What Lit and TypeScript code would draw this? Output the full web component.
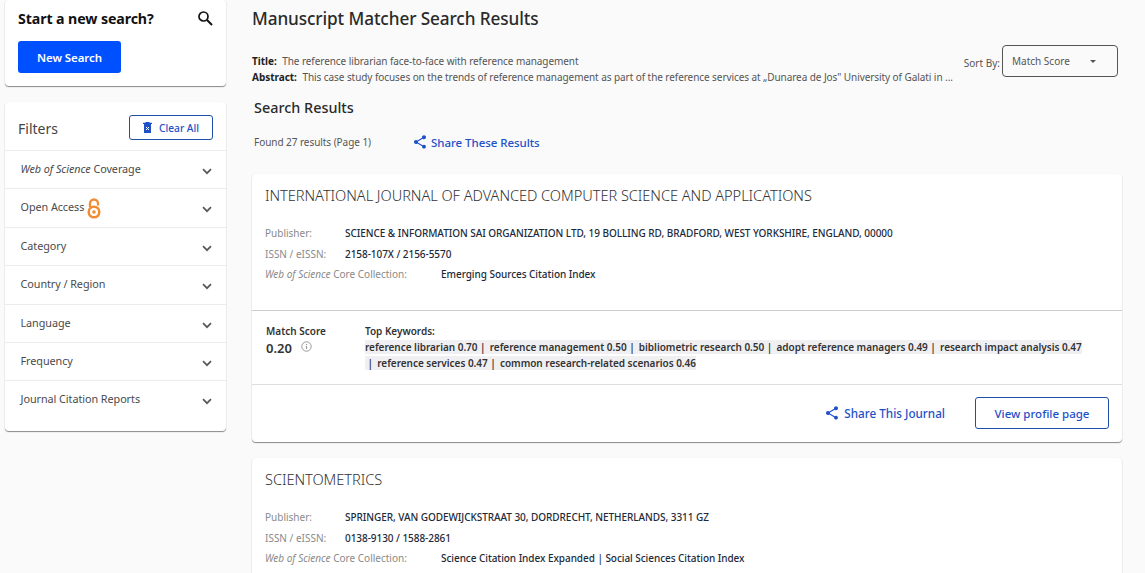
import { LitElement, html, css } from "lit";
import { customElement } from "lit/decorators.js";

const chevron = html`<svg class="chev" width="10" height="7" viewBox="0 0 10 7"><path d="M1 1.2 5 5.2 9 1.2" fill="none" stroke="#55595f" stroke-width="1.7"/></svg>`;
const share = (s: number) => html`<svg width="${s}" height="${s}" viewBox="0 0 24 24" fill="#1e50c8"><path d="M18 16.1c-.8 0-1.5.3-2 .8L8.9 12.700c.1-.2.1-.5.1-.7s0-.5-.1-.7l7-4.100c.5.5 1.300.8 2.100.8 1.700 0 3-1.300 3-3s-1.300-3-3-3-3 1.300-3 3c0 .2 0 .5.1.7l-7 4.100c-.5-.5-1.300-.8-2.100-.8-1.700 0-3 1.300-3 3s1.300 3 3 3c.8 0 1.600-.3 2.100-.8l7.100 4.200c-.1.2-.1.4-.1.600 0 1.600 1.300 2.900 2.900 2.900s2.900-1.300 2.900-2.900-1.300-3-2.900-3z"/></svg>`;

const filters = [
  [html`<i>Web of Science</i> Coverage`, 38],
  [html`<span class="oa-label">Open Access</span><svg class="oa" width="14" height="21" viewBox="0 0 14 21"><path d="M3 9V5.500a4 4 0 0 1 8 0V7.500" fill="none" stroke="#f08c32" stroke-width="2.300"/><circle cx="7" cy="14" r="5.300" fill="none" stroke="#f08c32" stroke-width="2.500"/><circle cx="7" cy="14" r="1.800" fill="#f08c32"/></svg>`, 39],
  ["Category", 38],
  ["Country / Region", 39],
  ["Language", 38],
  ["Frequency", 38],
  ["Journal Citation Reports", 51],
] as const;

@customElement("app-root")
export class AppRoot extends LitElement {
  static styles = css`
    :host { display: flex; width: 1145px; height: 573px; overflow: hidden; background: #fafafa; color: #333; font-family: "Noto Sans", "Open Sans", sans-serif; font-size: 11px; }
    * { box-sizing: border-box; }
    .side { width: 221px; margin-left: 5px; flex: none; }
    .card { background: #fff; border-radius: 4px; box-shadow: 0 1px 1px rgba(0,0,0,.45), 0 0 2px rgba(0,0,0,.06); }
    .start { height: 86px; padding: 8px 13px 0; }
    .start-head { display: flex; justify-content: space-between; align-items: center; height: 20px; font-weight: 700; font-size: 14.200px; color: #111; letter-spacing: -.1px; }
    .btn-primary { display: flex; align-items: center; justify-content: center; width: 103px; height: 32px; margin-top: 13px; background: #0050ff; color: #fff; border-radius: 3px; font-weight: 600; font-size: 11.500px; letter-spacing: -.1px; }
    .filters { height: 329px; margin-top: 16px; }
    .filter-head { height: 49px; padding: 13px 13px 0 13px; display: flex; justify-content: space-between; border-bottom: 1px solid #ececec; }
    .filter-title { font-size: 14px; color: #444; line-height: 27px; }
    .clear { width: 84px; height: 25px; border: 1px solid #1e50a8; border-radius: 3px; display: flex; align-items: center; justify-content: center; gap: 7px; color: #1e50c8; font-size: 10.200px; font-weight: 500; }
    .row { display: flex; justify-content: space-between; padding: 0 14px 0 15.500px; border-bottom: 1px solid #ececec; color: #4a4a4a; font-size: 10.800px; letter-spacing: -.05px; }
    .row:last-child { border-bottom: none; }
    .row > span { height: 36px; line-height: 36px; white-space: nowrap; }
    .oa-label { vertical-align: 1px; }
    .oa { margin-left: 3px; vertical-align: middle; margin-top: -2px; }
    .chev { margin-top: 17px; }
    .main { width: 870px; margin-left: 26px; flex: none; }
    h1 { margin: 0; height: 38px; font-size: 17.200px; line-height: 38px; font-weight: 500; color: #2a2a2a; letter-spacing: -.1px; }
    .summary { display: flex; justify-content: space-between; margin-top: 7px; height: 48px; }
    .meta { flex: 1; min-width: 0; padding-top: 8px; line-height: 16px; color: #555; font-size: 10px; white-space: nowrap; letter-spacing: -.07px; }
    .meta b { color: #222; margin-right: 3px; letter-spacing: -.03px; }
    .sort { display: flex; flex: none; align-items: flex-start; color: #555; margin-right: 4px; white-space: nowrap; }
    .sort label { margin-top: 11px; margin-right: 2px; font-size: 10px; }
    .select { width: 116px; height: 32px; border: 1px solid #555; border-radius: 4px; display: flex; align-items: center; padding-left: 9px; font-size: 10px; gap: 20px; }
    .caret { width: 0; height: 0; border: 3px solid transparent; border-top: 3px solid #555; border-bottom: 0; }
    h2 { margin: 0 0 0 2px; font-size: 14.400px; font-weight: 500; color: #2a2a2a; line-height: 20px; padding-top: 5px; height: 25px; }
    .found { display: flex; align-items: center; margin: 14px 0 0 2px; height: 20px; color: #555; font-size: 10px; letter-spacing: -.05px; }
    .link { display: inline-flex; align-items: center; gap: 3px; color: #1e50c8; font-size: 11.500px; font-weight: 500; }
    .found .link { margin-left: 41px; }
    .journal { margin-top: 22px; }
    .journal + .journal { margin-top: 16px; }
    .top { height: 137px; padding: 11px 13px 0; border-bottom: 1px solid #ccc; }
    .jname { font-size: 14.600px; line-height: 20px; color: #333; font-weight: 300; letter-spacing: -.05px; }
    .facts { margin-top: 18px; font-size: 10px; line-height: 20.500px; }
    .fact { display: flex; color: #8a8a8a; white-space: pre; }
    .fact > span:first-child { width: 80px; flex: none; }
    .fact b { font-weight: 500; color: #1c2a3a; letter-spacing: -.05px; }
    .fact.wide > span:first-child { width: 176px; }
    .match { height: 74px; padding: 12px 13px 0; border-bottom: 1px solid #ddd; display: flex; }
    .score { width: 99px; flex: none; margin-left: 1px; }
    .score small { display: block; font-weight: 600; font-size: 10px; line-height: 16px; color: #333; }
    .score strong { display: inline-block; font-size: 13px; line-height: 18px; font-weight: 600; color: #333; }
    .score svg { margin-left: 9px; vertical-align: 1px; }
    .kw { font-size: 10px; line-height: 16px; font-weight: 600; color: #333; letter-spacing: -.03px; }
    .kw mark { background: #f0f0f3; color: inherit; }
    .actions { height: 57px; display: flex; justify-content: flex-end; align-items: center; padding: 0 13px 1px 0; gap: 30px; }
    .actions .link { font-size: 11.700px; gap: 4px; }
    .view { width: 134px; height: 32px; border: 1px solid #1e50a8; border-radius: 3px; display: flex; align-items: center; justify-content: center; color: #1e50c8; font-size: 11.500px; font-weight: 500; }
  `;

  private facts(pub: string, issn: string, coll: string) {
    return html`<div class="facts">
      <div class="fact"><span>Publisher:</span><b>${pub}</b></div>
      <div class="fact"><span>ISSN / eISSN:</span><b>${issn}</b></div>
      <div class="fact wide"><span><i>Web of Science</i> Core Collection:</span><b>${coll}</b></div>
    </div>`;
  }

  render() {
    return html`
      <aside class="side">
        <section class="card start">
          <div class="start-head"><span>Start a new search?</span>
            <svg width="16" height="16" viewBox="0 0 16 16"><circle cx="6.500" cy="6.500" r="4.500" fill="none" stroke="#111" stroke-width="1.700"/><path d="M10 10 15 15" stroke="#111" stroke-width="1.900"/></svg>
          </div>
          <div class="btn-primary">New Search</div>
        </section>
        <section class="card filters">
          <div class="filter-head"><span class="filter-title">Filters</span>
            <div class="clear"><svg width="9" height="11" viewBox="0 0 9 11"><path d="M1 2h7v9H1zM0 .800h9V2H0zM2.500 0h4v1h-4z" fill="#1e50c8"/><path d="M3 5l3 3M6 5l-3 3" stroke="#fff" stroke-width="1"/></svg>Clear All</div>
          </div>
          ${filters.map(([label, h]) => html`<div class="row" style="height:${h}px"><span>${label}</span>${chevron}</div>`)}
        </section>
      </aside>
      <main class="main">
        <h1>Manuscript Matcher Search Results</h1>
        <div class="summary">
          <div class="meta">
            <div><b>Title:</b> The reference librarian face-to-face with reference management</div>
            <div><b>Abstract:</b> This case study focuses on the trends of reference management as part of the reference services at „Dunarea de Jos" University of Galati in ...</div>
          </div>
          <div class="sort"><label>Sort By:</label><div class="select">Match Score<span class="caret"></span></div></div>
        </div>
        <h2>Search Results</h2>
        <div class="found"><span>Found 27 results (Page 1)</span><span class="link">${share(16)}Share These Results</span></div>
        <article class="card journal">
          <div class="top">
            <div class="jname">INTERNATIONAL JOURNAL OF ADVANCED COMPUTER SCIENCE AND APPLICATIONS</div>
            ${this.facts("SCIENCE & INFORMATION SAI ORGANIZATION LTD, 19 BOLLING RD, BRADFORD, WEST YORKSHIRE, ENGLAND, 00000", "2158-107X / 2156-5570", "Emerging Sources Citation Index")}
          </div>
          <div class="match">
            <div class="score"><small>Match Score</small><strong>0.20</strong><svg width="11" height="11" viewBox="0 0 11 11"><circle cx="5.500" cy="5.500" r="4.700" fill="none" stroke="#999"/><path d="M5.500 5v3M5.500 3v1" stroke="#999" stroke-width="1.200"/></svg></div>
            <div class="kw">Top Keywords:<br/><mark>reference librarian 0.70 |&nbsp;&#8201;reference management 0.50 |&nbsp;&#8201;bibliometric research 0.50 |&nbsp;&#8201;adopt reference managers 0.49 |&nbsp;&#8201;research impact analysis 0.47</mark><br/><mark>&nbsp;|&nbsp;&#8201;reference services 0.47 |&nbsp;&#8201;common research-related scenarios 0.46</mark></div>
          </div>
          <div class="actions"><span class="link">${share(16)}Share This Journal</span><div class="view">View profile page</div></div>
        </article>
        <article class="card journal">
          <div class="top">
            <div class="jname">SCIENTOMETRICS</div>
            ${this.facts("SPRINGER, VAN GODEWIJCKSTRAAT 30, DORDRECHT, NETHERLANDS, 3311 GZ", "0138-9130 / 1588-2861", "Science Citation Index Expanded | Social Sciences Citation Index")}
          </div>
        </article>
      </main>
    `;
  }
}
